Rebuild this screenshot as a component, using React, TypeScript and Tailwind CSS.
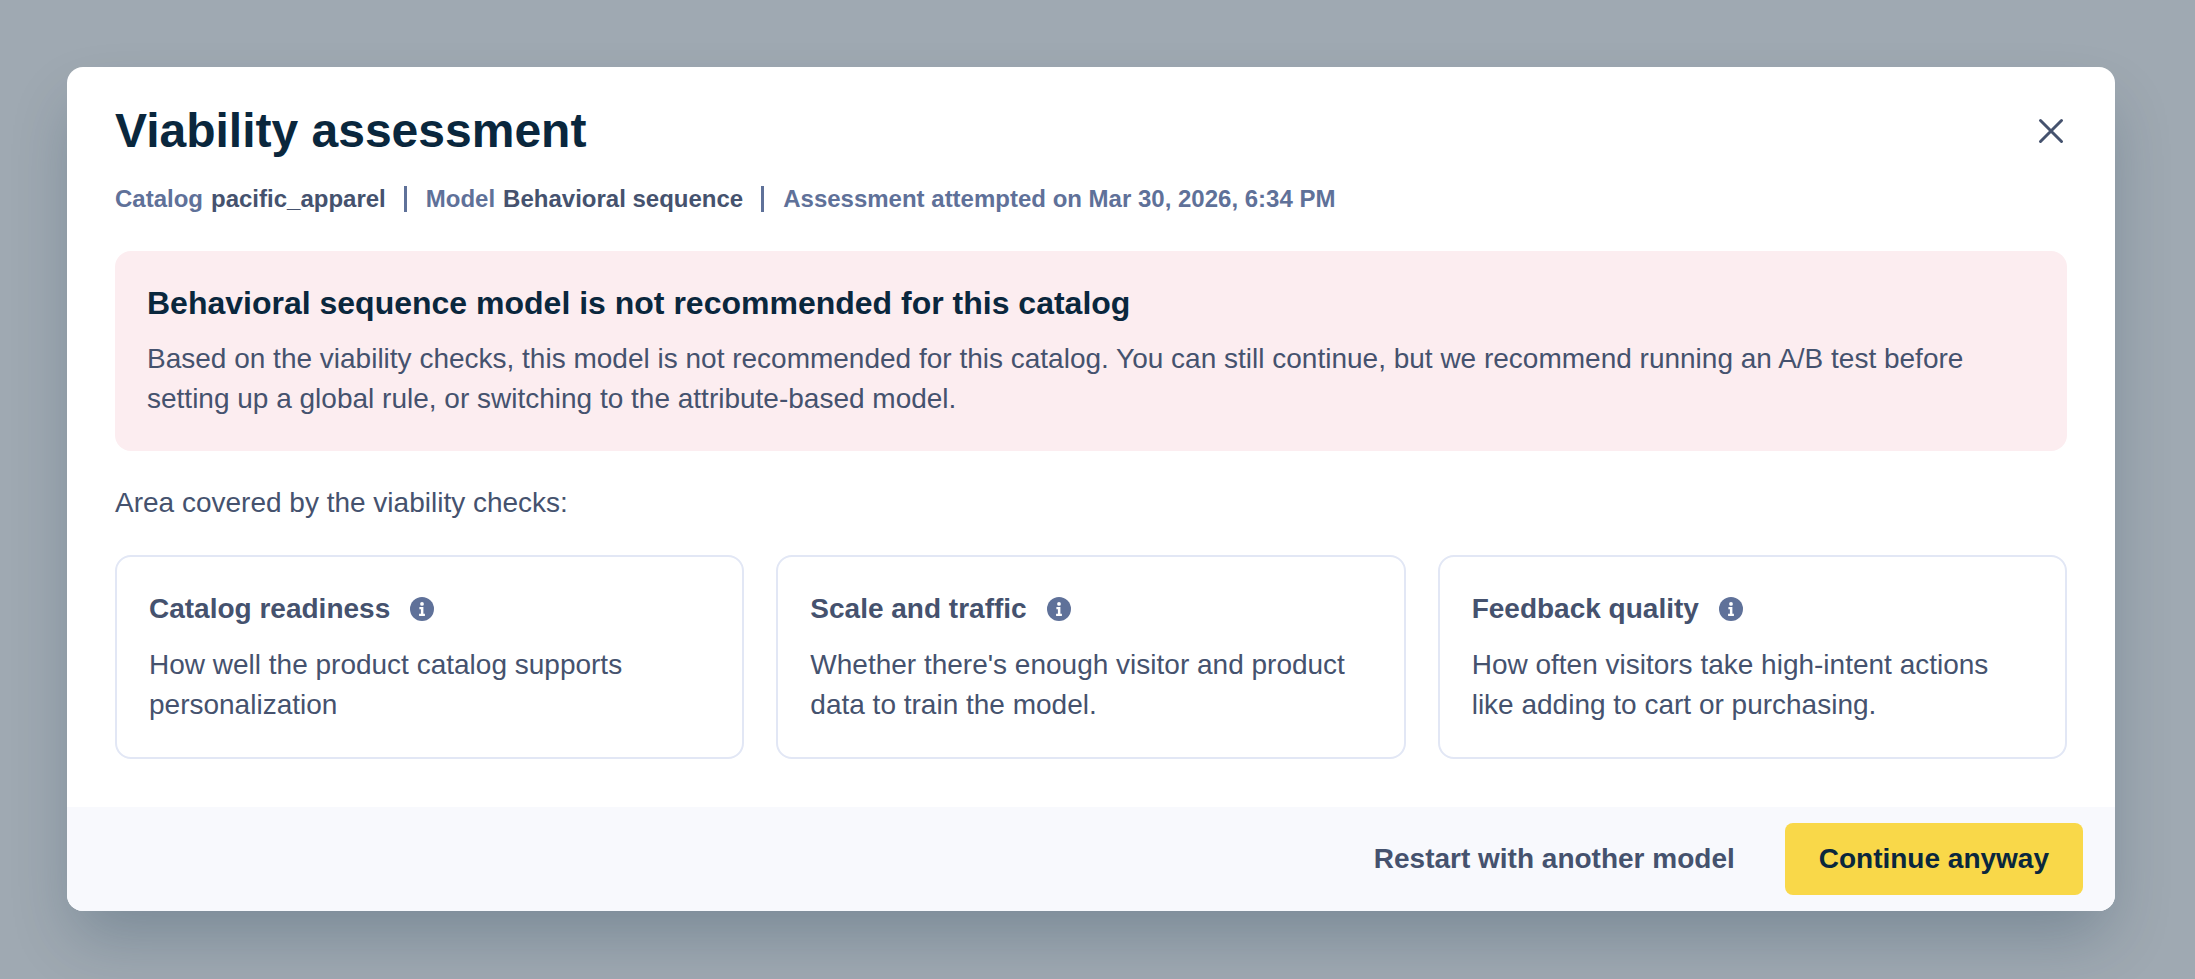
const checks = [
    { title: 'Catalog readiness', text: 'How well the product catalog supports personalization' },
    { title: 'Scale and traffic', text: "Whether there's enough visitor and product data to train the model." },
    { title: 'Feedback quality', text: 'How often visitors take high-intent actions like adding to cart or purchasing.' },
];

function Divider() {
    return <span aria-hidden="true" className="w-[3px] h-[26px] ml-[18px] mr-[19px] bg-[#5f7199]" />;
}

function InfoIcon() {
    return (
        <svg className="size-6" viewBox="0 0 24 24" aria-hidden="true">
            <circle cx="12" cy="12" r="12" fill="#5f7199" />
            <circle cx="12" cy="6.9" r="1.9" fill="#fff" />
            <path d="M9.4 10h4v6.7h1.5v2.2H9.1v-2.2h1.8v-4.5H9.4z" fill="#fff" />
        </svg>
    );
}

function CheckCard({ title, text }: { title: string; text: string }) {
    return (
        <section className="flex-1 min-w-0 rounded-2xl border-2 border-[#e2e7f5] p-8">
            <div className="flex items-center gap-5">
                <h3 className="font-bold">{title}</h3>
                <button type="button" aria-label={`About ${title}`}>
                    <InfoIcon />
                </button>
            </div>
            <p className="mt-4">{text}</p>
        </section>
    );
}

export default function App() {
    return (
        <div
            className="min-h-screen bg-[#9fa9b2] pt-[67px] pb-12 pl-[67px] pr-20 text-[28px] leading-10 text-[#45526e]"
            style={{ fontFamily: '"Liberation Sans", Arial, sans-serif' }}
        >
            <div
                role="dialog"
                aria-labelledby="dialog-title"
                className="rounded-2xl bg-white shadow-[0_32px_64px_-8px_rgba(0,39,61,0.24)]"
            >
                <div className="px-12 pt-8 pb-12">
                    {/* Header */}
                    <div className="flex items-center justify-between">
                        <h1 id="dialog-title" className="text-5xl leading-16 font-bold text-[#0a273d]">
                            Viability assessment
                        </h1>
                        <button type="button" aria-label="Close">
                            <svg className="size-8" viewBox="0 0 32 32" fill="none" stroke="currentColor" strokeWidth="3" strokeLinecap="round">
                                <path d="M5.5 5.5l21 21M26.5 5.5l-21 21" />
                            </svg>
                        </button>
                    </div>
                    <div className="mt-5 flex items-center text-2xl leading-8 font-bold">
                        <div className="flex gap-2">
                            <span className="text-[#5f7199]">Catalog</span>
                            <span>pacific_apparel</span>
                        </div>
                        <Divider />
                        <div className="flex gap-2">
                            <span className="text-[#5f7199]">Model</span>
                            <span>Behavioral sequence</span>
                        </div>
                        <Divider />
                        <span className="text-[#5f7199]">Assessment attempted on Mar 30, 2026, 6:34 PM</span>
                    </div>

                    {/* Verdict */}
                    <div className="mt-9 rounded-2xl bg-[#fcedf0] p-8">
                        <h2 className="text-[32px] leading-10 font-bold text-[#0a273d]">
                            Behavioral sequence model is not recommended for this catalog
                        </h2>
                        <p className="mt-4">
                            Based on the viability checks, this model is not recommended for this catalog. You can still
                            continue, but we recommend running an A/B test before setting up a global rule, or switching
                            to the attribute-based model.
                        </p>
                    </div>

                    <p className="mt-8">Area covered by the viability checks:</p>
                    <div className="mt-8 flex gap-8">
                        {checks.map((check) => (
                            <CheckCard key={check.title} {...check} />
                        ))}
                    </div>
                </div>

                {/* Footer */}
                <div className="flex justify-end gap-4 rounded-b-2xl bg-[#f8f9fd] px-8 py-4 font-bold">
                    <button type="button" className="rounded-lg px-[34px] py-4">
                        Restart with another model
                    </button>
                    <button type="button" className="rounded-lg bg-[#f9d849] px-[34px] py-4 text-[#0a273d]">
                        Continue anyway
                    </button>
                </div>
            </div>
        </div>
    );
}
